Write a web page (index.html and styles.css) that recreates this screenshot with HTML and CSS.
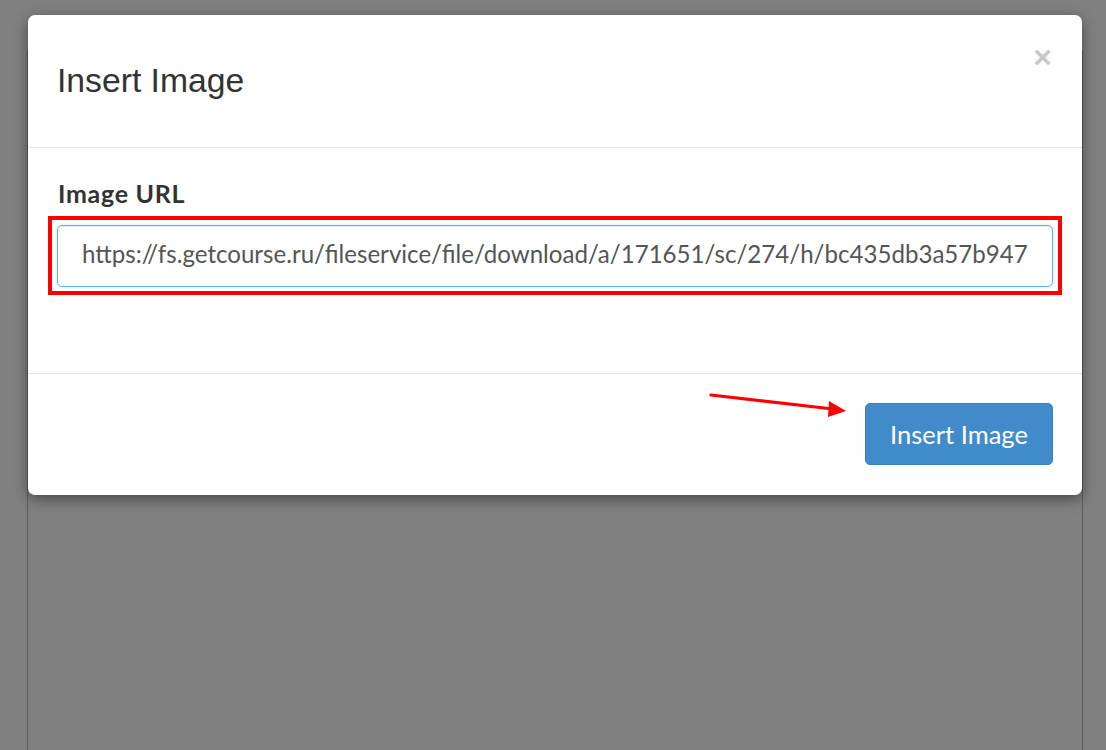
FILE: index.html
```html
<!DOCTYPE html>
<html>
<head>
<meta charset="utf-8">
<link rel="stylesheet" href="styles.css">
</head>
<body>
<div class="page">
  <div class="editor"></div>
</div>
<div class="modal">
  <div class="modal-header">
    <h4 class="modal-title">Insert Image</h4>
    <button class="close" type="button">&times;</button>
  </div>
  <div class="modal-body">
    <label class="label">Image URL</label>
    <div class="highlight">
      <input class="url-input" type="text" value="https://fs.getcourse.ru/fileservice/file/download/a/171651/sc/274/h/bc435db3a57b947">
    </div>
  </div>
  <div class="modal-footer">
    <svg class="arrow" width="150" height="30" viewBox="0 0 150 30">
      <line x1="2" y1="4" x2="124" y2="18" stroke="#ff0000" stroke-width="3.2" stroke-linecap="round"/>
      <polygon points="120,10 137,20 119,26" fill="#ff0000"/>
    </svg>
    <button class="btn" type="button">Insert Image</button>
  </div>
</div>
</body>
</html>
```
FILE: styles.css
```css
html, body {
  margin: 0;
  padding: 0;
  height: 100%;
}
body {
  background: #808080;
  overflow: hidden;
  font-family: "Lato", "Open Sans", sans-serif;
}
.page {
  padding: 50px 23px 0 27px;
  height: 100%;
  box-sizing: border-box;
}
.editor {
  height: 100%;
  border: 1px solid #5c5c5c;
  border-bottom: none;
}
.modal {
  position: absolute;
  left: 28px;
  top: 15px;
  width: 1054px;
  background: #fff;
  border-radius: 7px;
  box-shadow: 0 4px 14px rgba(0, 0, 0, 0.45);
}
.modal-header {
  height: 133px;
  box-sizing: border-box;
  border-bottom: 1px solid #e5e5e5;
  display: flex;
  align-items: center;
  justify-content: space-between;
  padding: 0 26px 0 29px;
  position: relative;
}
.modal-title {
  margin: 0;
  font-family: "Liberation Sans", Arial, sans-serif;
  font-weight: normal;
  font-size: 33.7px;
  color: #333;
  line-height: 1;
  padding-top: 0;
}
.close {
  position: absolute;
  right: 30px;
  top: 26px;
  background: none;
  border: none;
  padding: 0;
  font-family: "Liberation Sans", Arial, sans-serif;
  font-size: 32px;
  font-weight: bold;
  line-height: 1;
  color: #c8c8c8;
}
.modal-body {
  height: 226px;
  box-sizing: border-box;
  padding: 32px 20px 0 20px;
  border-bottom: 1px solid #e5e5e5;
}
.label {
  display: block;
  font-weight: bold;
  font-size: 25px;
  letter-spacing: 0.7px;
  color: #333;
  margin: 0 0 10px 10px;
  line-height: 26px;
}
.highlight {
  border: 4px solid #ff0000;
  padding: 5px 5px 4px 5px;
}
.url-input {
  display: block;
  width: 100%;
  height: 62px;
  box-sizing: border-box;
  border: 1px solid #66afe9;
  border-radius: 5px;
  padding: 0 10px 5px 24px;
  font-family: "Lato", "Open Sans", sans-serif;
  font-size: 24.1px;
  color: #555;
  box-shadow: inset 0 1px 1px rgba(0,0,0,0.075), 0 0 4px rgba(102,175,233,0.3);
  outline: none;
}
.modal-footer {
  height: 121px;
  box-sizing: border-box;
  display: flex;
  justify-content: flex-end;
  align-items: flex-start;
  padding: 29px 29px 0 0;
}
.arrow {
  margin: -12px 6px 0 0;
}
.btn {
  width: 188px;
  height: 62px;
  background: #428bca;
  border: 1px solid #3a80bd;
  border-radius: 5px;
  color: #fff;
  font-family: "Lato", "Open Sans", sans-serif;
  font-size: 25.5px;
  padding: 0;
}
```
